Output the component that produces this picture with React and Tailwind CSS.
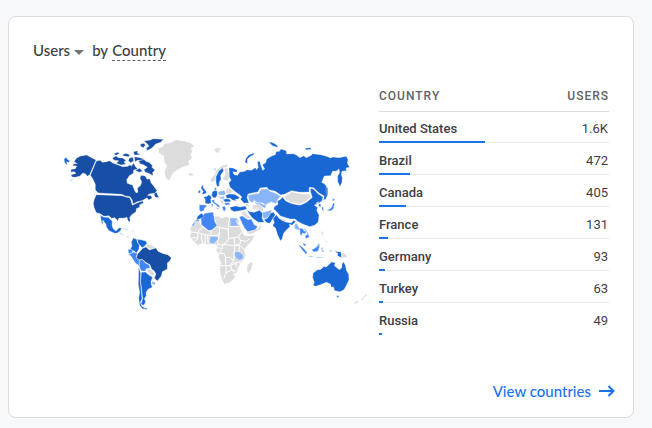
import React from 'react';

const TOTAL_USERS = 3480;

const rows = [
  { country: 'United States', users: 1610, label: '1.6K' },
  { country: 'Brazil', users: 472, label: '472' },
  { country: 'Canada', users: 405, label: '405' },
  { country: 'France', users: 131, label: '131' },
  { country: 'Germany', users: 93, label: '93' },
  { country: 'Turkey', users: 63, label: '63' },
  { country: 'Russia', users: 49, label: '49' },
];

const NAVY = '#174ea6';
const BLUE = '#1967d2';
const MID = '#4285f4';
const LIGHT = '#8ab4f8';
const NONE = '#dcdcdc';

// Each region keeps its own origin; one map unit is three drawing units.
const regions = [
  {
    at: 'translate(50 130) scale(0.33333)',
    shapes: [
      [NAVY, 'M80 84 92 78 110 75 122 82 138 90 119 134 112 139 107 132 98 129 90 138 76 142 66 141 63 135 78 130 73 125 61 126 64 118 76 116 80 108 68 107 71 101 82 101 72 95z'],
      [NAVY, 'M139 93 150 91 158 97 170 95 178 92 190 100 205 105 218 110 234 109 240 104 244 109 250 99 258 112 264 117 251 120 250 130 238 137 230 150 232 160 248 166 253 180 258 188 264 187 262 175 272 166 275 155 270 145 273 136 286 138 291 148 299 146 303 158 311 168 321 182 314 190 300 191 292 196 303 197 307 204 296 210 291 203 276 212 262 215 249 222 247 211 240 200 226 198 215 193 145 189 136 180 136 163 128 146 121 136z'],
      [NAVY, 'M187 84 198 78 206 83 218 84 228 91 222 97 228 103 213 105 199 100 206 92 192 91zM190 72 202 67 209 70 199 76zM216 75 228 70 240 75 236 80 224 79zM238 84 249 82 251 93 242 98 235 92zM253 80 270 83 282 87 276 91 262 91 255 96zM250 65 263 62 262 69 272 74 253 75zM266 92 281 88 288 94 297 97 308 107 305 111 315 121 308 127 309 137 296 130 285 126 282 119 292 112 280 104 270 101zM256 121 269 115 278 124 267 127zM312 192 319 186 327 203 316 202z'],
      [NAVY, 'M271 42 282 40 286 46 280 53 272 49zM282 33 301 30 309 26 340 28 332 37 317 42 306 54 291 62 289 54 297 48 290 40z'],
      [NAVY, 'M139 194 215 197 231 202 239 203 243 212 247 226 261 219 278 213 281 218 268 225 270 231 259 236 258 245 245 254 239 263 241 276 234 273 231 262 220 265 207 264 203 273 195 263 185 265 176 257 162 259 151 251 139 248 132 232 130 220 133 207z'],
      [BLUE, 'M42 87 50 82 52 88 60 92 56 97 50 95 52 104 44 99zM151 256 162 262 175 262 181 269 187 273 186 286 190 297 198 303 207 293 215 294 211 303 203 309 194 310 177 302 169 291 168 283 158 270 159 286 155 278z'],
      ['#c6dafc', 'M58 151 68 145 71 148 62 154zM15 288 20 293 24 294 26 298z'],
    ],
  },
  {
    at: 'translate(110 130) scale(0.33333)',
    shapes: [
      [NONE, 'M144 56 158 50 164 41 180 38 198 30 222 33 240 38 254 48 244 54 247 64 242 74 247 84 235 94 238 104 218 111 204 119 191 127 184 138 178 152 168 145 164 132 165 120 171 108 163 97 161 78 146 68zM234 132 240 128 251 131 250 136 242 138zM314 60 320 55 330 60 326 70z'],
    ],
  },
  {
    at: 'translate(110 225) scale(0.33333)',
    shapes: [
      ['#c6dafc', 'M24 22 36 23 41 30 34 29zM33 8 45 9 56 15 49 16zM62 17 72 18 70 22zM44 31 58 36 55 40z'],
      [BLUE, 'M70 39 80 43 82 52 88 60 87 72 80 84 72 78 61 72 66 63 64 51z'],
      [BLUE, 'M82 43 96 45 108 48 111 55 105 62 97 68 89 60 84 53z'],
      [NONE, 'M112 55 121 59 130 64 136 67 132 73 120 71 111 68 108 62z'],
      [MID, 'M54 73 63 73 69 77 66 84 56 86z'],
      [MID, 'M71 81 82 86 78 97 87 104 88 122 76 114 65 96 56 87 65 85z'],
      [NAVY, 'M98 70 108 66 118 75 138 69 144 79 160 86 173 89 184 98 180 107 172 114 172 132 157 140 154 153 142 168 133 159 138 147 132 137 125 133 120 119 107 112 99 104 87 104 79 98 83 87z'],
      [MID, 'M88 106 98 104 107 115 117 119 121 129 109 131 105 139 93 137 88 125z'],
      [NONE, 'M109 135 118 131 126 138 134 145 131 154 121 149z'],
      [BLUE, 'M94 142 106 141 118 151 128 157 123 169 124 179 127 187 114 193 108 203 109 212 103 221 107 230 102 241 93 238 98 221 95 195 92 170z'],
      [BLUE, 'M86 126 92 145 91 170 94 200 96 221 91 232 95 243 108 252 98 252 89 241 86 220 89 202 85 180z'],
      [LIGHT, 'M127 168 137 174 134 180 125 177z'],
      [MID, 'M103 246 114 253 105 254z'],
    ],
  },
  {
    at: 'translate(185 135) scale(0.33333)',
    shapes: [
      [NONE, 'M88 42 102 38 109 41 100 47 96 54 90 48z'],
      [NONE, 'M77 131 86 122 97 103 110 92 125 88 130 94 116 99 103 106 93 123 93 137 80 142 76 138z'],
      [BLUE, 'M93 142 93 125 102 107 113 99 116 107 107 121 108 134 103 140 103 152 96 155z'],
      [NONE, 'M118 102 127 97 130 112 134 125 129 136 117 137 114 129 122 117z'],
      [BLUE, 'M50 152 56 151 54 157 61 166 65 174 56 178 51 176 55 169 48 160zM40 168 46 164 46 173 40 175z'],
      [BLUE, 'M56 187 65 184 72 179 80 187 77 194 79 204 69 207 60 204 61 194z'],
      [BLUE, 'M82 170 90 166 97 169 97 179 93 188 84 188 80 181z'],
      [MID, 'M43 209 63 210 66 213 58 219 58 226 47 230 43 225z'],
      [MID, 'M79 196 89 194 88 201 105 213 102 218 90 208 82 201zM80 207 84 208 83 216 80 215zM93 218 101 219 99 223z'],
      [LIGHT, 'M99 170 118 166 122 175 118 181 101 180z'],
      [MID, 'M87 102 91 100 91 107zM88 160 93 157 95 164 89 165z'],
      [NONE, 'M123 160 136 160 142 170 137 177 123 175zM97 182 109 184 117 184 119 191 103 192zM103 195 115 197 117 209 109 207z'],
      [LIGHT, 'M107 185 119 185 116 192 106 191z'],
      [BLUE, 'M122 181 132 177 149 178 164 187 160 192 151 193 154 198 142 195 136 190 125 190z'],
      [BLUE, 'M113 194 124 191 134 193 138 200 121 201z'],
      [MID, 'M119 203 133 203 135 209 121 210zM111 216 119 213 123 222 117 230z'],
      [BLUE, 'M135 217 151 213 166 216 181 213 186 222 174 226 160 228 148 230 137 224z'],
      [BLUE, 'M180 82 182 71 191 60 206 54 208 58 195 65 187 73 187 86zM254 20 266 25 272 31 262 29z'],
      [NONE, 'M178 205 190 208 194 217 184 214z'],
      [NONE, 'M202 210 213 208 230 216 238 226 228 229 213 222 204 224z'],
      [LIGHT, 'M207 201 219 204 230 205 239 216 229 215 214 208z'],
    ],
  },
  {
    at: 'translate(250 135) scale(0.33333)',
    shapes: [
      [BLUE, 'M-63 98-52 99-38 105-39 112-52 110-47 119-37 121-31 111-16 109-8 104 4 106 16 98 20 104 25 97 22 80 29 79 33 92 38 106 44 102 37 89 47 83 50 72 65 63 76 59 78 50 88 49 93 42 109 47 110 57 130 56 139 60 150 68 161 62 169 68 184 61 187 56 213 59 234 65 240 69 250 66 266 68 289 64 294 74 292 85 299 97 288 99 290 107 276 109 274 118 277 129 276 142 270 155 263 139 263 124 269 112 267 102 258 109 248 108 242 122 223 123 215 142 224 147 232 158 233 179 227 193 220 195 223 183 207 174 191 158 178 157 177 171 160 172 145 171 125 167 103 178 92 180 76 169 56 164 51 157 30 159 24 171 6 174-6 177-9 188-3 203-18 205-29 192-24 187-31 179-43 171-60 157-64 144-57 136-62 125z'],
      [LIGHT, 'M-6 181 8 178 27 175 32 163 52 162 58 168 75 174 92 184 84 192 78 206 63 201 46 210 37 203 23 204 13 196 6 204-3 195z'],
      [NONE, 'M103 184 125 171 145 175 160 177 180 178 183 186 167 199 150 207 125 202 108 195z'],
      [BLUE, 'M98 186 107 198 126 206 150 211 170 202 187 187 182 172 181 160 190 162 204 176 219 186 216 197 205 206 193 210 203 218 200 226 207 240 205 260 195 270 180 275 163 269 153 265 143 259 135 252 120 252 91 243 80 230 71 222 73 215 84 208 82 198 90 194z'],
      [BLUE, 'M56 21 71 24 84 33 82 37 67 32zM165 40 182 38 184 43 168 45zM228 156 233 160 233 181 229 178zM205 208 212 206 212 216 207 214z'],
      [MID, 'M215 215 220 217 221 228 216 225zM247 190 255 194 248 199zM250 203 254 207 250 222 242 228 230 226 243 220z'],
      [NONE, 'M14 208 30 210 39 220 34 227 23 221zM198 204 206 200 204 210z'],
      [LIGHT, 'M20 202 34 206 50 212 44 220 33 212z'],
    ],
  },
  {
    at: 'translate(185 205) scale(0.33333)',
    shapes: [
      [NONE, 'M18 84 16 69 28 51 42 50 52 66 71 78 77 79 96 64 90 43 89 34 101 34 110 40 123 35 134 38 158 39 163 47 160 53 167 70 177 91 188 93 209 91 200 108 186 123 178 133 181 148 179 161 166 173 164 183 159 187 157 202 146 207 151 216 136 232 118 238 112 226 106 208 104 193 108 174 101 158 102 146 94 137 97 124 88 116 69 119 54 115 37 120 23 106 15 94z'],
      [MID, 'M48 35 60 25 84 21 87 35 89 49 96 62 79 76 70 76 49 59z'],
      [BLUE, 'M51 24 56 35 45 41 34 46 38 33z'],
      [MID, 'M20 62 32 46 43 44 41 49 30 50 26 62z'],
      [LIGHT, 'M135 38 158 40 153 47 160 63 136 63z'],
      [LIGHT, 'M76 94 96 95 101 101 94 109 85 117 73 113z'],
      [LIGHT, 'M151 140 162 140 174 149 175 160 163 166 152 158 148 148z'],
      [NONE, 'M187 180 200 170 203 177 197 196 189 207 186 196z'],
      [NONE, 'M168 22 181 19 188 30 199 40 188 42 173 31z'],
      [MID, 'M163 37 171 32 189 44 199 42 208 60 218 64 211 75 188 80 177 67z'],
      [NONE, 'M183 83 207 76 219 71 225 61 216 56 230 62 226 74 197 88z'],
      [BLUE, 'M185 14 194 20 207 22 223 16 233 25 231 39 238 52 220 52 207 43 200 37 193 27z'],
      [LIGHT, 'M233 22 245 19 261 15 257 26 249 37 238 41 232 36z'],
    ],
  },
  {
    at: 'translate(265 210) scale(0.33333)',
    shapes: [
      [BLUE, 'M-3 29 8 24 17 10 25 6 31 15 25 23 15 40 5 38z'],
      [BLUE, 'M24 26 34 14 42 25 62 36 79 39 86 31 92 35 81 46 73 42 75 50 64 60 56 70 51 88 46 92 37 73 32 55 23 46 28 38z'],
      [NONE, 'M44 23 62 31 65 36 49 30z'],
      [LIGHT, 'M89 45 95 39 101 51 107 61 100 60 91 57 88 51z'],
      [MID, 'M104 55 112 55 117 62 123 65 121 72 112 69 109 79 105 71zM115 53 123 60 130 72 133 81 123 86 120 78 128 73z'],
      [BLUE, 'M113 98 121 103 122 109 116 106z'],
      [MID, 'M99 102 109 109 120 119 127 129 122 132 111 119zM140 119 152 113 161 101 164 109 159 124 147 126z'],
      [LIGHT, 'M128 137 141 138 149 142 131 140zM154 141 174 142 172 144 154 144zM168 114 176 112 172 118 179 127 171 125zM192 120 205 122 195 125zM153 111 161 100 166 105z'],
      [BLUE, 'M208 122 218 125 228 126 230 143 217 137 219 131z'],
      [NONE, 'M230 126 240 131 248 139 242 142 231 144zM246 132 256 128 252 134zM168 63 176 67 173 77 180 90 173 83zM180 91 187 93 185 100zM267 279 277 272 281 275 272 282zM286 269 296 260 304 252 307 256 299 261 291 271z'],
      [BLUE, 'M144 190 156 180 168 178 177 169 183 172 191 164 200 156 211 158 208 167 223 179 230 174 231 162 235 155 241 165 244 181 251 193 252 209 246 223 237 239 225 245 209 242 205 230 199 232 196 222 184 217 166 224 152 229 144 226 148 217 143 203z'],
      [BLUE, 'M214 257 222 257 219 265z'],
    ],
  },
];

function WorldMap() {
  return (
    <svg viewBox="33 81 346 255" className="block w-full" role="img" aria-label="Users by country on a world map">
      {regions.map((region) => (
        <g key={region.at} transform={region.at} stroke="#ffffff" strokeWidth="1" strokeLinejoin="round">
          {region.shapes.map(([fill, d]) => (
            <path key={d} d={d} fill={fill} />
          ))}
        </g>
      ))}
      <g transform="translate(185 205) scale(0.33333)" fill="none" stroke="#ffffff" strokeWidth="3">
        <path d="M18 81 37 83 52 67M37 83 39 101 28 109M37 83 51 87 76 92 80 78M51 87 49 96 53 116M60 91 61 116M68 93 70 117M96 64 104 67 103 90 76 92M104 67 130 73 130 53 135 38M130 65 161 65M103 90 97 118 113 120 124 112 131 101 130 73M131 101 147 98 161 96 170 81M147 98 150 121M161 96 166 106 184 109 194 101M113 120 110 133 104 145 118 146 122 158 134 157 146 166 147 146 150 121 164 117 168 106M150 121 164 121 178 134M164 121 162 140M113 120 128 119 140 122 150 121M95 128 111 130M101 182 136 182 146 166M122 158 122 180M136 182 151 174 166 171M124 183 123 204 116 221M123 204 137 195 149 200M136 182 141 194 152 198M151 174 154 186M20 98 37 99" />
      </g>
    </svg>
  );
}

function UsersTable() {
  return (
    <table className="w-full border-separate border-spacing-0 text-[13px] leading-5 text-[#3c4043]">
      <thead>
        <tr className="h-[31px] text-xs tracking-[1px] text-[#5f6368]">
          <th scope="col" className="border-b border-[#dadce0] p-0 text-left font-medium">COUNTRY</th>
          <th scope="col" className="border-b border-[#dadce0] p-0 text-right font-medium">USERS</th>
        </tr>
      </thead>
      <tbody>
        {rows.map((row, i) => (
          <tr key={row.country} className="relative h-8">
            <th scope="row" className="p-0 pt-[7px] text-left align-top font-medium">
              {row.country}
              <div className={`absolute inset-x-0 bottom-px flex h-0.5 items-center ${i < rows.length - 1 ? 'bg-[linear-gradient(transparent_50%,#e8eaed_50%)]' : ''}`}>
                <div className="h-0.5 bg-[#1a73e8]" style={{ width: `${(row.users / TOTAL_USERS) * 100}%` }} />
              </div>
            </th>
            <td className="p-0 pt-[7px] pr-px text-right align-top">{row.label}</td>
          </tr>
        ))}
      </tbody>
    </table>
  );
}

export default function App() {
  return (
    <main className="min-h-screen bg-[#f8f9fb] pt-4 pr-[18px] pb-2.5 pl-2 font-[Roboto,sans-serif]">
      <section className="rounded-lg border border-[#dadce0] bg-white pt-6 pb-4">
        <header className="flex h-5 items-start px-6 font-[Lato,sans-serif] text-[15px] leading-[18px] font-medium text-[#3c4043]">
          <button type="button" className="flex items-center gap-1">
            Users
            <svg viewBox="0 0 10 5" className="mt-1 h-[5px] w-2.5" fill="#757575" aria-hidden="true">
              <path d="M0 0h10L5 5z" />
            </svg>
          </button>
          <span className="ml-2">by</span>
          <button type="button" className="ml-1 border-b border-dashed border-[#5f6368] pb-px">Country</button>
        </header>
        <div className="mt-5 flex items-start px-6">
          <div className="min-w-0 flex-1">
            <WorldMap />
          </div>
          <div className="w-[230px] shrink-0">
            <UsersTable />
          </div>
        </div>
        <footer className="mt-[45px] flex justify-end pr-[18px]">
          <a href="#countries" className="flex h-5 items-center gap-2 font-[Lato,sans-serif] text-[15px] font-medium text-[#1a73e8]">
            View countries
            <svg viewBox="0 0 16 12" className="h-3 w-4" fill="none" stroke="currentColor" strokeWidth="2" aria-hidden="true">
              <path d="M0 6h14.500M9.500 1l5 5-5 5" />
            </svg>
          </a>
        </footer>
      </section>
    </main>
  );
}
